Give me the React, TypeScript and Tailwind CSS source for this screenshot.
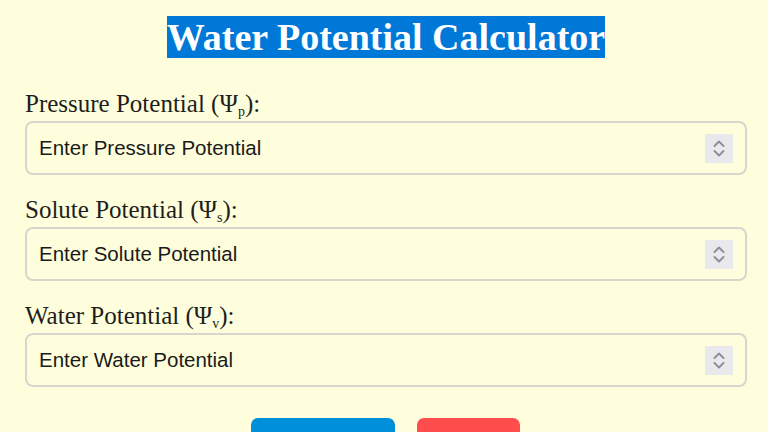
import { ReactNode } from 'react';

type Field = {
  name: string;
  sub: string;
  placeholder: string;
};

const fields: Field[] = [
  { name: 'Pressure Potential', sub: 'p', placeholder: 'Enter Pressure Potential' },
  { name: 'Solute Potential', sub: 's', placeholder: 'Enter Solute Potential' },
  { name: 'Water Potential', sub: 'v', placeholder: 'Enter Water Potential' },
];

function Spinner() {
  return (
    <div className="flex h-[29px] w-[28px] flex-col items-center justify-center gap-[3px] bg-[#e9e9ed]">
      <svg width="12" height="7" viewBox="0 0 12 7" fill="none">
        <path d="M1.5 6 L6 1.5 L10.5 6" stroke="#8b8b99" strokeWidth="1.8" strokeLinecap="round" strokeLinejoin="round" />
      </svg>
      <svg width="12" height="7" viewBox="0 0 12 7" fill="none">
        <path d="M1.5 1 L6 5.5 L10.5 1" stroke="#8b8b99" strokeWidth="1.8" strokeLinecap="round" strokeLinejoin="round" />
      </svg>
    </div>
  );
}

function Label({ children }: { children: ReactNode }) {
  return (
    <label className="block font-['Liberation_Serif',serif] text-[25px] leading-[28px] text-[#1e1e1e]">
      {children}
    </label>
  );
}

export default function App() {
  return (
    <div className="h-[432px] overflow-hidden bg-[#fffedc] pl-[25px] pr-[21px] pt-[16px]">
      <h1 className="text-center font-['Liberation_Serif',serif] text-[38px] font-bold leading-[43px]">
        <span className="bg-[#0078d7] text-white">Water Potential Calculator</span>
      </h1>

      <div className="mt-[31px] flex flex-col gap-[21px]">
        {fields.map((f) => (
          <div key={f.sub}>
            <Label>
              {f.name} (Ψ
              <span className="relative top-[4px] text-[14px] leading-none">{f.sub}</span>):
            </Label>
            <div className="mt-[3px] flex h-[54px] items-center justify-between rounded-[8px] border-2 border-[#d6d6cc] pl-[12px] pr-[12px]">
              <span className="font-['Liberation_Sans',sans-serif] text-[20.5px] text-[#1a1a1a]">
                {f.placeholder}
              </span>
              <Spinner />
            </div>
          </div>
        ))}
      </div>

      <div className="mt-[31px] flex justify-center gap-[22px] pr-[2px]">
        <button className="flex h-[54px] w-[144px] items-center justify-center rounded-[7px] bg-[#0090d9] font-['Liberation_Sans',sans-serif] text-[18px] text-white">
          Calculate
        </button>
        <button className="flex h-[54px] w-[103px] items-center justify-center rounded-[7px] bg-[#ff4d4d] font-['Liberation_Sans',sans-serif] text-[18px] text-white">
          Reset
        </button>
      </div>
    </div>
  );
}
